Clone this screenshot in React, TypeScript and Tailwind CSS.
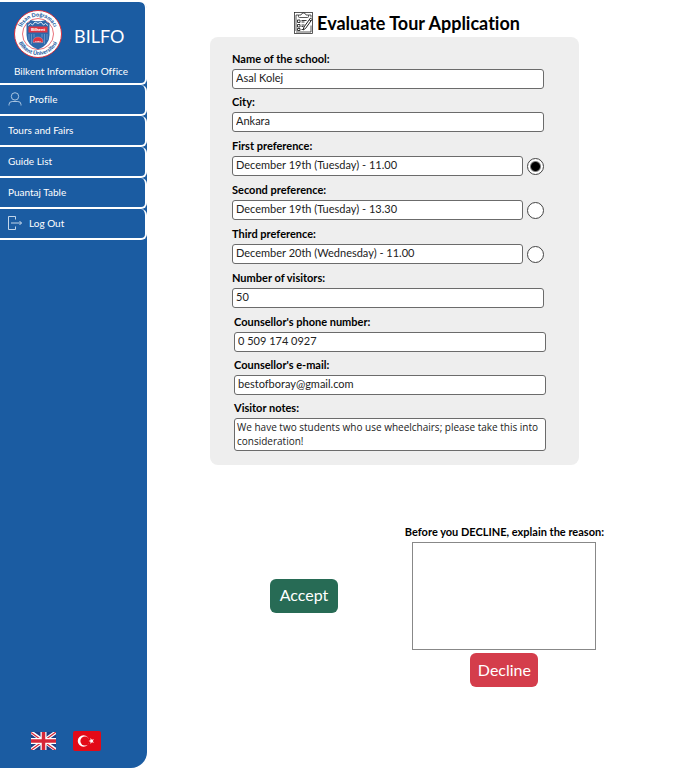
import type { ReactNode } from "react";

const inputStyle =
  "block h-5 w-full min-w-0 rounded-[3px] border border-[#6b6b6b] bg-white px-[3px] pb-1 text-[11px] leading-3.5 text-[#222] outline-none";
const labelStyle = "block h-[17px] w-fit text-[11px] leading-[14px] font-bold text-black";

function Crest() {
  return (
    <svg viewBox="0 0 96 96" className="size-12 shrink-0" role="img" aria-label="Bilkent University">
      <defs>
        <path id="crest-top" d="M13 48a35 35 0 0 1 70 0" />
        <path id="crest-bottom" d="M6 48a42 42 0 0 0 84 0" />
      </defs>
      <circle cx="48" cy="48" r="47" fill="#fff" stroke="#d6323f" strokeWidth="2" />
      <circle cx="48" cy="48" r="31" fill="#fff" stroke="#e0404c" strokeWidth="1.500" />
      <g fill="#1b5ba2" fontFamily="Lato, sans-serif" fontWeight="900" fontSize="11">
        <text textAnchor="middle">
          <textPath href="#crest-top" startOffset="50%">İhsan Doğramacı</textPath>
        </text>
        <text textAnchor="middle">
          <textPath href="#crest-bottom" startOffset="50%">Bilkent Üniversitesi</textPath>
        </text>
      </g>
      <path d="M25 26q6 0 8-6q15 5 30 0q2 6 8 6v24q0 20-23 29q-23-9-23-29z" fill="#2e68aa" />
      <path d="M28 31l5-4 4 3 5-6 6 3 6-3 5 6 4-3 5 4" fill="none" stroke="#dce8f5" strokeWidth="2" />
      <path d="M30 48v12M35 48v20M40 48v7M56 48v7M61 48v20M66 48v12" stroke="#9dbbdc" strokeWidth="1" />
      <rect x="29" y="33" width="38" height="12" fill="#df3542" />
      <text x="48" y="42" fill="#fff" fontFamily="Lato, sans-serif" fontWeight="900" fontSize="9" textAnchor="middle">
        Bilkent
      </text>
      <path d="M38 65v-3a10 8 0 0 1 20 0v3z" fill="#df3542" stroke="#fff" strokeWidth=".5" />
      <text x="48" y="63" fill="#fff" fontFamily="Lato, sans-serif" fontWeight="900" fontSize="5" textAnchor="middle">
        1984
      </text>
    </svg>
  );
}

function ProfileIcon() {
  return (
    <svg viewBox="0 0 14 14" className="h-3.5 w-3.5" fill="none" stroke="#b9d0e8" strokeWidth="0.9" aria-hidden="true">
      <circle cx="7" cy="4.4" r="3.7" />
      <path d="M1 13.500v-1q0-3 3.200-3h5.600q3.200 0 3.200 3v1" />
    </svg>
  );
}

function LogOutIcon() {
  return (
    <svg viewBox="0 0 14 14" className="h-3.5 w-3.5" fill="none" stroke="#d5e3f2" strokeWidth="0.9" aria-hidden="true">
      <path d="M7.500 3.500V.5h-7v13h7v-3M3 7h10.500M11.500 5l2 2-2 2" />
    </svg>
  );
}

function ClipboardIcon() {
  return (
    <svg viewBox="0 0 38 44" className="h-[22px] w-[19px]" fill="none" stroke="#222" strokeWidth="1.500" aria-hidden="true">
      <rect x="1" y="1" width="36" height="42" />
      <path d="M9 6H4v32M29 6h5v5M34 27v13H4" />
      <path d="M9 9V6h5q1-4 5-4t5 4h5v3q0 2-2 2H11q-2 0-2-2z" fill="#fff" />
      <path d="M7 16h5v5H7zM7 25h5v5H7zM7 33h5v4H7zM15 17h10M15 20h6M15 26h6M15 29h4M15 35h4" strokeWidth="1.800" />
      <path d="M33 12l3 3-13 18-5 3 2-6zM30 15l4 3" fill="#fff" strokeWidth="2" />
    </svg>
  );
}

function UnitedKingdomFlag() {
  return (
    <svg viewBox="0 0 50 36" className="h-[18px] w-[25px]" aria-hidden="true">
      <path fill="#1f3f85" d="M0 0h50v36H0z" />
      <path stroke="#fff" strokeWidth="7" d="M0 0l50 36M50 0L0 36" />
      <path stroke="#d62739" strokeWidth="2.500" d="M0 1l50 36M50 0L0 36" />
      <path stroke="#fff" strokeWidth="12" d="M25 0v36M0 18h50" />
      <path stroke="#d62739" strokeWidth="7" d="M25 0v36M0 18h50" />
    </svg>
  );
}

function TurkeyFlag() {
  return (
    <svg viewBox="0 0 56 40" className="h-5 w-7" aria-hidden="true">
      <rect width="56" height="40" rx="4" fill="#e30a17" />
      <circle cx="21" cy="20" r="11.500" fill="#fff" />
      <circle cx="24" cy="20" r="9.200" fill="#e30a17" />
      <path d="M31 20l4-1.400V14l2.800 3.700 4.200-1.400-2.600 3.700 2.600 3.700-4.200-1.400L35 26v-4.600z" fill="#fff" />
    </svg>
  );
}

function NavLink({ icon, children }: { icon?: ReactNode; children: ReactNode }) {
  return (
    <a
      href="#"
      className="flex h-[31px] items-center gap-[7px] rounded-r-md border-r-2 border-b-2 border-white bg-[#1b5ca2] pb-0.5 pl-2 text-[10px] leading-4 text-white"
    >
      {icon}
      {children}
    </a>
  );
}

function TextField({ id, label, value, type = "text" }: { id: string; label: string; value: string; type?: string }) {
  return (
    <div>
      <label htmlFor={id} className={labelStyle}>{label}</label>
      <input id={id} type={type} defaultValue={value} className={inputStyle} />
    </div>
  );
}

function Preference({ id, label, value, checked }: { id: string; label: string; value: string; checked?: boolean }) {
  return (
    <div>
      <label htmlFor={id} className={labelStyle}>{label}</label>
      <div className="flex items-center gap-1">
        <input id={id} type="text" defaultValue={value} className={inputStyle} />
        <input
          type="radio"
          name="preference"
          aria-label={`Choose ${label}`}
          defaultChecked={checked}
          className="size-[17px] shrink-0 appearance-none rounded-full border border-[#444] bg-white checked:bg-[radial-gradient(circle,#000_4px,#fff_6px)]"
        />
      </div>
    </div>
  );
}

export default function App() {
  return (
    <div className="flex min-h-screen bg-white font-['Lato','Liberation_Sans',sans-serif] [font-variant-ligatures:none]">
      <aside className="mt-0.5 flex w-[147px] shrink-0 flex-col rounded-tr-lg rounded-br-2xl bg-[#1b5ca2] text-white">
        <header className="flex h-[83px] flex-col rounded-r-md border-r-2 border-b-2 border-white pt-2">
          <div className="flex items-center gap-3 pl-3.5">
            <Crest />
            <span className="pt-1 text-[18px] leading-6">BILFO</span>
          </div>
          <p className="mt-[5px] pl-3.5 text-[10px] leading-4 whitespace-nowrap">Bilkent Information Office</p>
        </header>
        <nav className="flex flex-col">
          <NavLink icon={<ProfileIcon />}>Profile</NavLink>
          <NavLink>Tours and Fairs</NavLink>
          <NavLink>Guide List</NavLink>
          <NavLink>Puantaj Table</NavLink>
          <NavLink icon={<LogOutIcon />}>Log Out</NavLink>
        </nav>
        <div className="mt-auto flex items-center gap-[17px] pb-[17px] pl-[31px]">
          <button type="button" aria-label="English"><UnitedKingdomFlag /></button>
          <button type="button" aria-label="Türkçe"><TurkeyFlag /></button>
        </div>
      </aside>

      <main className="min-w-0 flex-1 pr-[74px] pl-[63px]">
        <h1 className="flex h-[37px] items-center justify-center gap-1 pt-2 text-[18px] leading-6 font-bold text-black">
          <ClipboardIcon />
          Evaluate Tour Application
        </h1>

        <form>
          <section className="mr-[25px] rounded-lg bg-[#eee] pt-[15px] pr-[33px] pb-3.5 pl-[22px]">
            <div className="mr-0.5 flex flex-col gap-[7px]">
              <div className="flex flex-col gap-1.5">
                <TextField id="school" label="Name of the school:" value="Asal Kolej" />
                <TextField id="city" label="City:" value="Ankara" />
              </div>
              <Preference id="first" label="First preference:" value="December 19th (Tuesday) - 11.00" checked />
              <Preference id="second" label="Second preference:" value="December 19th (Tuesday) - 13.30" />
              <Preference id="third" label="Third preference:" value="December 20th (Wednesday) - 11.00" />
              <TextField id="visitors" label="Number of visitors:" value="50" />
            </div>
            <div className="mt-[7px] ml-0.5 flex flex-col gap-1.5">
              <TextField id="phone" type="tel" label="Counsellor's phone number:" value="0 509 174 0927" />
              <TextField id="email" type="email" label="Counsellor's e-mail:" value="bestofboray@gmail.com" />
              <div>
                <label htmlFor="notes" className={labelStyle}>Visitor notes:</label>
                <textarea
                  id="notes"
                  rows={2}
                  defaultValue="We have two students who use wheelchairs; please take this into consideration!"
                  className="block h-[33px] w-full resize-none overflow-hidden rounded-[3px] border border-[#6b6b6b] bg-white px-0.5 py-px font-['Open_Sans','Lato',sans-serif] text-[10px] leading-3.5 text-[#222] outline-none"
                />
              </div>
            </div>
          </section>

          <section className="mt-[60px] flex items-end justify-between pl-[60px]">
            <button type="button" className="mb-[74px] h-[34px] w-[68px] rounded-md bg-[#276b55] pb-0.5 text-[16px] leading-6 text-white">
              Accept
            </button>
            <div className="flex flex-col items-center">
              <label htmlFor="reason" className={labelStyle}>Before you DECLINE, explain the reason:</label>
              <textarea id="reason" className="block h-[108px] w-[184px] resize-none border border-[#888] bg-white p-1 text-[11px] leading-4 outline-none" />
              <button type="button" className="mt-[3px] h-[34px] w-[68px] rounded-md bg-[#d43d4b] text-[16px] leading-6 text-white">
                Decline
              </button>
            </div>
          </section>
        </form>
      </main>
    </div>
  );
}
